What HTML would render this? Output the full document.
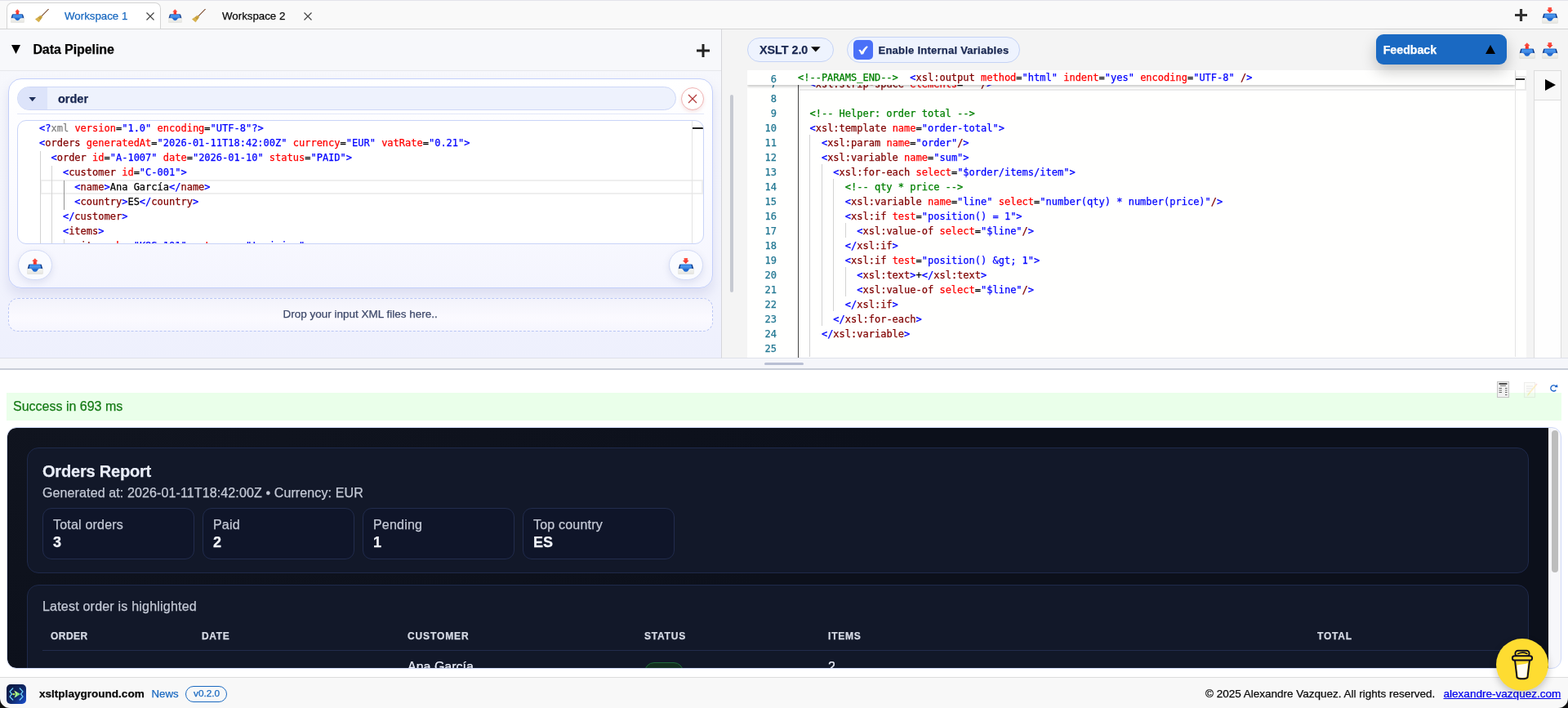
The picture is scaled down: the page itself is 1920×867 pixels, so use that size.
<!DOCTYPE html>
<html lang="en">
<head>
<meta charset="utf-8">
<title>xsltplayground.com</title>
<style>
*{box-sizing:border-box}
html,body{margin:0;padding:0}
body{width:1920px;height:867px;overflow:hidden;background:#fff;position:relative;
 font-family:"Liberation Sans",sans-serif;color:#000}
#app{position:absolute;left:0;top:0;width:1920px;height:867px;overflow:hidden;will-change:transform;-webkit-text-stroke:.25px}
.abs{position:absolute}
.t{position:absolute;white-space:nowrap;line-height:1}
svg{display:block}
.ico{position:absolute;z-index:2}
/* ---------- top bar ---------- */
#topbar{position:absolute;left:0;top:0;width:1920px;height:36px;background:#f9f9f9;border-top:1px solid #e3e3ea;border-bottom:1px solid #d4d4d4}
#tab1{position:absolute;left:8px;top:2px;width:189px;height:32px;background:#fff;border:1px solid #d4d4d4;border-bottom:none;border-radius:7px 7px 0 0}
/* ---------- left panel ---------- */
#left{position:absolute;left:0;top:36px;width:884px;height:403px;background:linear-gradient(180deg,#f7f8fc 0%,#f4f5fd 60%,#eef0fd 100%);border-right:1px solid #d6d6da;border-bottom:1px solid #dfe1ea}
#lefthead{position:absolute;left:0;top:0;width:883px;height:51px;border-bottom:1px solid #e6e7ec;background:#f7f8fb}
#card{position:absolute;left:10px;top:60px;width:863px;height:257px;border:1px solid #c3cffa;border-radius:16px;
 background:linear-gradient(180deg,#ffffff 0%,#fbfbff 50%,#f4f5fe 100%);box-shadow:0 8px 14px rgba(120,130,190,.18)}
#pill{position:absolute;left:10px;top:9px;width:807px;height:29px;border:1px solid #cdd7f7;border-radius:15px;background:#eef2fd;overflow:hidden}
#pill .tg{position:absolute;left:0;top:0;width:36px;height:29px;background:#dde4fa}
#closebtn{position:absolute;left:823px;top:10px;width:28px;height:28px;border-radius:50%;border:1px solid #f0b4b4;background:#fff;box-shadow:0 2px 4px rgba(200,80,80,.15)}
#carddiv{position:absolute;left:10px;top:42px;width:841px;height:1px;background:#e3e7f8}
#ed1{position:absolute;left:10px;top:50px;width:841px;height:152px;border:1px solid #c9d4f8;border-radius:11px;background:#fff;overflow:hidden}
.code{font-family:"DejaVu Sans Mono","Liberation Mono",monospace;font-size:12px;line-height:18px;white-space:pre;color:#000}
.code .ln{height:18px}
.kd{color:#0000ff}.kt{color:#800000}.ka{color:#ff0000}.kv{color:#0000ff}.kc{color:#008000}.km{color:#808080}
.guide{position:absolute;width:1px;background:#d3d3d3;z-index:1}
.cbtn{position:absolute;width:42px;height:37px;border-radius:18.5px;border:1px solid #d3dbf6;background:#fafbff;box-shadow:0 3px 8px rgba(100,110,170,.16)}
#drop{position:absolute;left:10px;top:329px;width:863px;height:41px;border:1px dashed #b9c6f5;border-radius:12px;background:linear-gradient(180deg,#f3f3fb 0%,#fbfaff 60%,#f6f6fe 100%)}
/* ---------- right panel ---------- */
#right{position:absolute;left:884px;top:36px;width:1036px;height:403px;background:#f4f4f4;border-bottom:1px solid #dfe1ea}
.rpill{position:absolute;border:1px solid #c5d3f5;background:#eef3fe;border-radius:16px}
#ed2{position:absolute;left:31px;top:50px;width:954px;height:352px;background:#fffffe;overflow:hidden;z-index:0}
#ed2 .no{display:inline-block;width:36px;text-align:right;color:#237893;margin-right:26px}
#sticky .no{position:relative;top:1.5px}
#sticky{position:absolute;left:0;top:0;width:940px;height:18px;background:#fffffe;box-shadow:0 2px 3px rgba(0,0,0,.22);z-index:3}
#runcol{position:absolute;left:994px;top:50px;width:34px;height:352px;border:1px solid #dcdcdc;border-bottom:none;background:#fefefe}
#runbtn{position:absolute;left:0;top:0;width:32px;height:36px;border-bottom:1px solid #dcdcdc;background:#f8f8f8}
#feedback{position:absolute;left:801px;top:6px;width:160px;height:37px;border-radius:9px;background:#1a69c2;box-shadow:0 8px 18px rgba(0,0,0,.22);z-index:5}
/* ---------- splitter ---------- */
#split{position:absolute;left:0;top:439px;width:1920px;height:14px;background:#f5f6fa;border-bottom:2px solid #c9ced8}
/* ---------- bottom ---------- */
#succ{position:absolute;left:8px;top:481px;width:1904px;height:34px;background:#eaffea}
#frame{position:absolute;left:8px;top:523px;width:1904px;height:296px;border-radius:12px;background:#f7f7fa;overflow:hidden;border:1px solid #cfd9f8}
#dark{position:absolute;left:0;top:0;width:1887px;height:294px;background:radial-gradient(1400px 500px at 5% 0%,#10141f 0%,#0c101b 70%);overflow:hidden;border-radius:11px 0 0 11px}
.dcard{position:absolute;left:24px;width:1839px;border:1px solid #1f2a4b;border-radius:14px;background:#121829}
.stat{position:absolute;top:73px;width:186px;height:63px;border:1px solid #222c4d;border-radius:11px;background:#0f1529}
.dtxt{color:#c4c9d6}
.th{position:absolute;top:56px;white-space:nowrap;line-height:1;font-weight:bold;font-size:12px;color:#d6dae5}
/* ---------- footer ---------- */
#footer{position:absolute;left:0;top:829px;width:1920px;height:38px;background:#f8f8f8;border-top:1px solid #dcdcdc}
#coffee{position:absolute;left:1832px;top:782px;width:64px;height:64px;border-radius:50%;background:#fedc31;box-shadow:0 4px 10px rgba(0,0,0,.22);z-index:20}
.corner{position:absolute;width:12px;height:12px;z-index:30;overflow:hidden}
</style>
</head>
<body>
<div id="app">
<div id="topbar">
 <div id="tab1"></div>
 <svg class="ico" style="left:13px;top:10px;opacity:1" width="17" height="17" viewBox="0 0 20 20"><defs><linearGradient id="b1" x1="0" y1="0" x2="0" y2="1"><stop offset="0" stop-color="#2a78dc"/><stop offset=".45" stop-color="#4f9bf0"/><stop offset="1" stop-color="#1c66cf"/></linearGradient><linearGradient id="r1" x1="0" y1="0" x2="0" y2="1"><stop offset="0" stop-color="#ff5a4d"/><stop offset="1" stop-color="#f02a1e"/></linearGradient><linearGradient id="w1" x1="0" y1="0" x2="0" y2="1"><stop offset="0" stop-color="#f6f6f2"/><stop offset="1" stop-color="#e4e4e0"/></linearGradient></defs><path d="M2.3 7.7 L17.6 7.7 L19.4 13.6 L0.6 13.6 Z" fill="#0a3280"/><path d="M3.4 7.7 L16.5 7.7 L17.6 13.6 L2.4 13.6 Z" fill="url(#b1)"/><rect x="0.3" y="13.1" width="19.3" height="6.6" rx="1.2" fill="url(#w1)" stroke="#d9d9d4" stroke-width=".4"/><path d="M4.4 13 C6.2 13 6.5 14.7 7.3 15.7 C8.4 17 11.4 17 12.5 15.7 C13.3 14.7 13.6 13 15.4 13 Z" fill="#1f6ad2"/><path d="M9.8 0.3 L13.4 4.1 L11.8 4.1 L11.8 7.7 L7.8 7.7 L7.8 4.1 L6.2 4.1 Z" fill="url(#r1)"/></svg><svg class="ico" style="left:42.5px;top:10px" width="17" height="17" viewBox="0 0 17 17"><path d="M16.4 0.2 L7.6 9.2" stroke="#7a4a2c" stroke-width="1.05" stroke-linecap="round" fill="none"/><path d="M6.9 7.9 L8.9 9.9 L4.5 16 L0.3 12.5 Z" fill="#d8b24a" stroke="#c9a03a" stroke-width=".4" stroke-linejoin="round"/><path d="M5.6 9.1 L7.9 11.2 M4.3 10.2 L7 12.6" stroke="#a27a28" stroke-width=".9" fill="none"/></svg>
 <div class="t" style="left:79px;top:12px;font-size:13.3px;color:#1a69c0">Workspace 1</div>
 <svg class="ico" style="left:178px;top:13px" width="12" height="12" viewBox="0 0 12 12"><path d="M1.5 1.5 L10.5 10.5 M10.5 1.5 L1.5 10.5" stroke="#444" stroke-width="1.2" fill="none"/></svg>
 <svg class="ico" style="left:205.5px;top:10px;opacity:1" width="17" height="17" viewBox="0 0 20 20"><defs><linearGradient id="b2" x1="0" y1="0" x2="0" y2="1"><stop offset="0" stop-color="#2a78dc"/><stop offset=".45" stop-color="#4f9bf0"/><stop offset="1" stop-color="#1c66cf"/></linearGradient><linearGradient id="r2" x1="0" y1="0" x2="0" y2="1"><stop offset="0" stop-color="#ff5a4d"/><stop offset="1" stop-color="#f02a1e"/></linearGradient><linearGradient id="w2" x1="0" y1="0" x2="0" y2="1"><stop offset="0" stop-color="#f6f6f2"/><stop offset="1" stop-color="#e4e4e0"/></linearGradient></defs><path d="M2.3 7.7 L17.6 7.7 L19.4 13.6 L0.6 13.6 Z" fill="#0a3280"/><path d="M3.4 7.7 L16.5 7.7 L17.6 13.6 L2.4 13.6 Z" fill="url(#b2)"/><rect x="0.3" y="13.1" width="19.3" height="6.6" rx="1.2" fill="url(#w2)" stroke="#d9d9d4" stroke-width=".4"/><path d="M4.4 13 C6.2 13 6.5 14.7 7.3 15.7 C8.4 17 11.4 17 12.5 15.7 C13.3 14.7 13.6 13 15.4 13 Z" fill="#1f6ad2"/><path d="M9.8 0.3 L13.4 4.1 L11.8 4.1 L11.8 7.7 L7.8 7.7 L7.8 4.1 L6.2 4.1 Z" fill="url(#r2)"/></svg><svg class="ico" style="left:235px;top:10px" width="17" height="17" viewBox="0 0 17 17"><path d="M16.4 0.2 L7.6 9.2" stroke="#7a4a2c" stroke-width="1.05" stroke-linecap="round" fill="none"/><path d="M6.9 7.9 L8.9 9.9 L4.5 16 L0.3 12.5 Z" fill="#d8b24a" stroke="#c9a03a" stroke-width=".4" stroke-linejoin="round"/><path d="M5.6 9.1 L7.9 11.2 M4.3 10.2 L7 12.6" stroke="#a27a28" stroke-width=".9" fill="none"/></svg>
 <div class="t" style="left:272px;top:12px;font-size:13.3px;color:#0a0a0a">Workspace 2</div>
 <svg class="ico" style="left:371px;top:13px" width="12" height="12" viewBox="0 0 12 12"><path d="M1.5 1.5 L10.5 10.5 M10.5 1.5 L1.5 10.5" stroke="#444" stroke-width="1.2" fill="none"/></svg>
 <svg class="ico" style="left:1855px;top:10px" width="15" height="15" viewBox="0 0 15 15"><path d="M7.5 0 V15 M0 7.5 H15" stroke="#333" stroke-width="3.2" fill="none"/></svg>
 <svg class="ico" style="left:1888px;top:8px;opacity:1" width="20" height="20" viewBox="0 0 20 20"><defs><linearGradient id="b3" x1="0" y1="0" x2="0" y2="1"><stop offset="0" stop-color="#2a78dc"/><stop offset=".45" stop-color="#4f9bf0"/><stop offset="1" stop-color="#1c66cf"/></linearGradient><linearGradient id="r3" x1="0" y1="0" x2="0" y2="1"><stop offset="0" stop-color="#ff5a4d"/><stop offset="1" stop-color="#f02a1e"/></linearGradient><linearGradient id="w3" x1="0" y1="0" x2="0" y2="1"><stop offset="0" stop-color="#f6f6f2"/><stop offset="1" stop-color="#e4e4e0"/></linearGradient></defs><path d="M2.3 7.7 L17.6 7.7 L19.4 13.6 L0.6 13.6 Z" fill="#0a3280"/><path d="M3.4 7.7 L16.5 7.7 L17.6 13.6 L2.4 13.6 Z" fill="url(#b3)"/><rect x="0.3" y="13.1" width="19.3" height="6.6" rx="1.2" fill="url(#w3)" stroke="#d9d9d4" stroke-width=".4"/><path d="M4.4 13 C6.2 13 6.5 14.7 7.3 15.7 C8.4 17 11.4 17 12.5 15.7 C13.3 14.7 13.6 13 15.4 13 Z" fill="#1f6ad2"/><path d="M7.6 0 L12 0 L12 2.9 L13.7 2.9 L9.8 7 L5.9 2.9 L7.6 2.9 Z" fill="url(#r3)"/></svg>
</div>
<div id="left">
 <div id="lefthead">
  <svg class="ico" style="left:14px;top:19px" width="11" height="11" viewBox="0 0 11 11"><path d="M0 0 H11 L5.5 11 Z" fill="#000"/></svg>
  <div class="t" style="left:40.4px;top:17px;font-size:16px;font-weight:bold;letter-spacing:-0.08px;color:#000">Data Pipeline</div>
  <svg class="ico" style="left:853px;top:18px" width="16" height="16" viewBox="0 0 16 16"><path d="M8 0 V16 M0 8 H16" stroke="#222" stroke-width="3" fill="none"/></svg>
 </div>
 <div id="card">
  <div id="pill"><div class="tg"></div>
   <svg class="ico" style="left:13px;top:12px" width="9.4" height="5.2" viewBox="0 0 10 6"><path d="M0 0 H10 L5 6 Z" fill="#1f2f5a"/></svg>
   <div class="t" style="left:49px;top:7px;font-size:14.5px;font-weight:bold;color:#1a2852">order</div>
  </div>
  <div id="closebtn"><svg class="ico" style="left:7px;top:7px" width="12" height="12" viewBox="0 0 12 12"><path d="M1 1 L11 11 M11 1 L1 11" stroke="#b23a3a" stroke-width="1.3" fill="none"/></svg></div>
  <div id="carddiv"></div>
  <div id="ed1">
   <div class="guide" style="left:27px;top:37px;height:120px"></div>
   <div class="guide" style="left:41px;top:55px;height:100px"></div>
   <div class="guide" style="left:56px;top:73px;height:36px;background:#939393"></div>
   <div class="guide" style="left:56px;top:145px;height:10px"></div>
   <div class="abs" style="left:27px;top:72px;width:812px;height:18px;border:2px solid #eeeeee"></div>
   <div class="abs" style="left:825px;top:0;width:1px;height:150px;background:#e4e4e4"></div>
   <div class="abs" style="left:826px;top:8px;width:13px;height:2px;background:#222"></div>
   <div class="code abs" style="left:26px;top:0px"><div class="ln"><span class="kd">&lt;?</span><span class="km">xml</span> <span class="ka">version</span>=<span class="kv">"1.0"</span> <span class="ka">encoding</span>=<span class="kv">"UTF-8"</span><span class="kd">?&gt;</span></div><div class="ln"><span class="kd">&lt;</span><span class="kt">orders</span> <span class="ka">generatedAt</span>=<span class="kv">"2026-01-11T18:42:00Z"</span> <span class="ka">currency</span>=<span class="kv">"EUR"</span> <span class="ka">vatRate</span>=<span class="kv">"0.21"</span><span class="kd">&gt;</span></div><div class="ln">  <span class="kd">&lt;</span><span class="kt">order</span> <span class="ka">id</span>=<span class="kv">"A-1007"</span> <span class="ka">date</span>=<span class="kv">"2026-01-10"</span> <span class="ka">status</span>=<span class="kv">"PAID"</span><span class="kd">&gt;</span></div><div class="ln">    <span class="kd">&lt;</span><span class="kt">customer</span> <span class="ka">id</span>=<span class="kv">"C-001"</span><span class="kd">&gt;</span></div><div class="ln">      <span class="kd">&lt;</span><span class="kt">name</span><span class="kd">&gt;</span>Ana García<span class="kd">&lt;/</span><span class="kt">name</span><span class="kd">&gt;</span></div><div class="ln">      <span class="kd">&lt;</span><span class="kt">country</span><span class="kd">&gt;</span>ES<span class="kd">&lt;/</span><span class="kt">country</span><span class="kd">&gt;</span></div><div class="ln">    <span class="kd">&lt;/</span><span class="kt">customer</span><span class="kd">&gt;</span></div><div class="ln">    <span class="kd">&lt;</span><span class="kt">items</span><span class="kd">&gt;</span></div><div class="ln">      <span class="kd">&lt;</span><span class="kt">item</span> <span class="ka">sku</span>=<span class="kv">"K8S-101"</span> <span class="ka">category</span>=<span class="kv">"training"</span><span class="kd">&gt;</span></div></div>
  </div>
  <div class="cbtn" style="left:11px;top:209px"><svg class="ico" style="left:10px;top:9px;opacity:1" width="20" height="20" viewBox="0 0 20 20"><defs><linearGradient id="b4" x1="0" y1="0" x2="0" y2="1"><stop offset="0" stop-color="#2a78dc"/><stop offset=".45" stop-color="#4f9bf0"/><stop offset="1" stop-color="#1c66cf"/></linearGradient><linearGradient id="r4" x1="0" y1="0" x2="0" y2="1"><stop offset="0" stop-color="#ff5a4d"/><stop offset="1" stop-color="#f02a1e"/></linearGradient><linearGradient id="w4" x1="0" y1="0" x2="0" y2="1"><stop offset="0" stop-color="#f6f6f2"/><stop offset="1" stop-color="#e4e4e0"/></linearGradient></defs><path d="M2.3 7.7 L17.6 7.7 L19.4 13.6 L0.6 13.6 Z" fill="#0a3280"/><path d="M3.4 7.7 L16.5 7.7 L17.6 13.6 L2.4 13.6 Z" fill="url(#b4)"/><rect x="0.3" y="13.1" width="19.3" height="6.6" rx="1.2" fill="url(#w4)" stroke="#d9d9d4" stroke-width=".4"/><path d="M4.4 13 C6.2 13 6.5 14.7 7.3 15.7 C8.4 17 11.4 17 12.5 15.7 C13.3 14.7 13.6 13 15.4 13 Z" fill="#1f6ad2"/><path d="M9.8 0.3 L13.4 4.1 L11.8 4.1 L11.8 7.7 L7.8 7.7 L7.8 4.1 L6.2 4.1 Z" fill="url(#r4)"/></svg></div>
  <div class="cbtn" style="left:808px;top:209px"><svg class="ico" style="left:10px;top:9px;opacity:1" width="20" height="20" viewBox="0 0 20 20"><defs><linearGradient id="b5" x1="0" y1="0" x2="0" y2="1"><stop offset="0" stop-color="#2a78dc"/><stop offset=".45" stop-color="#4f9bf0"/><stop offset="1" stop-color="#1c66cf"/></linearGradient><linearGradient id="r5" x1="0" y1="0" x2="0" y2="1"><stop offset="0" stop-color="#ff5a4d"/><stop offset="1" stop-color="#f02a1e"/></linearGradient><linearGradient id="w5" x1="0" y1="0" x2="0" y2="1"><stop offset="0" stop-color="#f6f6f2"/><stop offset="1" stop-color="#e4e4e0"/></linearGradient></defs><path d="M2.3 7.7 L17.6 7.7 L19.4 13.6 L0.6 13.6 Z" fill="#0a3280"/><path d="M3.4 7.7 L16.5 7.7 L17.6 13.6 L2.4 13.6 Z" fill="url(#b5)"/><rect x="0.3" y="13.1" width="19.3" height="6.6" rx="1.2" fill="url(#w5)" stroke="#d9d9d4" stroke-width=".4"/><path d="M4.4 13 C6.2 13 6.5 14.7 7.3 15.7 C8.4 17 11.4 17 12.5 15.7 C13.3 14.7 13.6 13 15.4 13 Z" fill="#1f6ad2"/><path d="M7.6 0 L12 0 L12 2.9 L13.7 2.9 L9.8 7 L5.9 2.9 L7.6 2.9 Z" fill="url(#r5)"/></svg></div>
 </div>
 <div id="drop"><div class="t" style="left:335.5px;top:12.4px;font-size:13.5px;color:#3f4a6b">Drop your input XML files here..</div></div>
</div>
<div id="right">
 <div class="abs" style="left:10px;top:80px;width:4px;height:242px;background:#c6c9d1;border-radius:2px"></div>
 <div class="rpill" style="left:31px;top:10px;width:106px;height:30px">
  <div class="t" style="left:14px;top:6.6px;font-size:14.3px;font-weight:bold;color:#1a2852">XSLT 2.0</div>
  <svg class="ico" style="left:77.2px;top:10.2px" width="11.6" height="6.6" viewBox="0 0 11 6"><path d="M0 0 H11 L5.5 6 Z" fill="#0a0a0a"/></svg>
 </div>
 <div class="rpill" style="left:153px;top:9px;width:212px;height:32px">
  <div class="abs" style="left:7px;top:3px;width:24px;height:24px;border-radius:5px;background:#4a70f8"><svg class="ico" style="left:6px;top:6.5px" width="12" height="11" viewBox="0 0 12 11"><path d="M0.3 5.6 C1.3 4.5 2.5 4.5 3.2 5.5 L4.3 7.2 C6 4.2 8 1.9 10.6 0.3 L11.7 1.6 C9.4 4 7.5 7 6.2 10.3 L3.4 10.7 C2.7 8.8 1.6 7 0.3 5.6 Z" fill="#fff"/></svg></div>
  <div class="t" style="left:37.5px;top:8.5px;font-size:13px;letter-spacing:.24px;font-weight:bold;color:#1a2852">Enable Internal Variables</div>
 </div>
 <div id="ed2">
  <div class="abs" style="left:940px;top:0;width:1px;height:351px;background:#e4e4e4"></div>
  <div class="abs" style="left:941px;top:10px;width:13px;height:2px;background:#2a2a2a"></div>
  <div class="guide" style="left:62px;top:18px;height:334px;background:#444"></div>
  <div class="guide" style="left:76px;top:79px;height:272px"></div>
  <div class="guide" style="left:91px;top:115px;height:198px"></div>
  <div class="guide" style="left:105px;top:133px;height:162px"></div>
  <div class="guide" style="left:120px;top:187px;height:18px"></div>
  <div class="guide" style="left:120px;top:241px;height:36px"></div>
  <div class="abs" style="left:62px;top:7px;width:892px;height:18px;border:2px solid #eaeaea"></div>
  <div class="code abs" style="left:0;top:8px"><div class="ln"><span class="no">7</span>  <span class="kd">&lt;</span><span class="kt">xsl:strip-space</span> <span class="ka">elements</span>=<span class="kv">"*"</span><span class="kt">/</span><span class="kd">&gt;</span></div><div class="ln"><span class="no">8</span></div><div class="ln"><span class="no">9</span>  <span class="kc">&lt;!-- Helper: order total --&gt;</span></div><div class="ln"><span class="no">10</span>  <span class="kd">&lt;</span><span class="kt">xsl:template</span> <span class="ka">name</span>=<span class="kv">"order-total"</span><span class="kd">&gt;</span></div><div class="ln"><span class="no">11</span>    <span class="kd">&lt;</span><span class="kt">xsl:param</span> <span class="ka">name</span>=<span class="kv">"order"</span><span class="kt">/</span><span class="kd">&gt;</span></div><div class="ln"><span class="no">12</span>    <span class="kd">&lt;</span><span class="kt">xsl:variable</span> <span class="ka">name</span>=<span class="kv">"sum"</span><span class="kd">&gt;</span></div><div class="ln"><span class="no">13</span>      <span class="kd">&lt;</span><span class="kt">xsl:for-each</span> <span class="ka">select</span>=<span class="kv">"$order/items/item"</span><span class="kd">&gt;</span></div><div class="ln"><span class="no">14</span>        <span class="kc">&lt;!-- qty * price --&gt;</span></div><div class="ln"><span class="no">15</span>        <span class="kd">&lt;</span><span class="kt">xsl:variable</span> <span class="ka">name</span>=<span class="kv">"line"</span> <span class="ka">select</span>=<span class="kv">"number(qty) * number(price)"</span><span class="kt">/</span><span class="kd">&gt;</span></div><div class="ln"><span class="no">16</span>        <span class="kd">&lt;</span><span class="kt">xsl:if</span> <span class="ka">test</span>=<span class="kv">"position() = 1"</span><span class="kd">&gt;</span></div><div class="ln"><span class="no">17</span>          <span class="kd">&lt;</span><span class="kt">xsl:value-of</span> <span class="ka">select</span>=<span class="kv">"$line"</span><span class="kt">/</span><span class="kd">&gt;</span></div><div class="ln"><span class="no">18</span>        <span class="kd">&lt;/</span><span class="kt">xsl:if</span><span class="kd">&gt;</span></div><div class="ln"><span class="no">19</span>        <span class="kd">&lt;</span><span class="kt">xsl:if</span> <span class="ka">test</span>=<span class="kv">"position() &amp;gt; 1"</span><span class="kd">&gt;</span></div><div class="ln"><span class="no">20</span>          <span class="kd">&lt;</span><span class="kt">xsl:text</span><span class="kd">&gt;</span>+<span class="kd">&lt;/</span><span class="kt">xsl:text</span><span class="kd">&gt;</span></div><div class="ln"><span class="no">21</span>          <span class="kd">&lt;</span><span class="kt">xsl:value-of</span> <span class="ka">select</span>=<span class="kv">"$line"</span><span class="kt">/</span><span class="kd">&gt;</span></div><div class="ln"><span class="no">22</span>        <span class="kd">&lt;/</span><span class="kt">xsl:if</span><span class="kd">&gt;</span></div><div class="ln"><span class="no">23</span>      <span class="kd">&lt;/</span><span class="kt">xsl:for-each</span><span class="kd">&gt;</span></div><div class="ln"><span class="no">24</span>    <span class="kd">&lt;/</span><span class="kt">xsl:variable</span><span class="kd">&gt;</span></div><div class="ln"><span class="no">25</span></div></div>
  <div id="sticky" class="code"><span class="no">6</span><span class="kc">&lt;!--PARAMS_END--&gt;</span>  <span class="kd">&lt;</span><span class="kt">xsl:output</span> <span class="ka">method</span>=<span class="kv">"html"</span> <span class="ka">indent</span>=<span class="kv">"yes"</span> <span class="ka">encoding</span>=<span class="kv">"UTF-8"</span> <span class="kt">/</span><span class="kd">&gt;</span></div>
 </div>
 <div id="runcol"><div id="runbtn"><svg class="ico" style="left:13px;top:10px" width="13" height="14" viewBox="0 0 13 14"><path d="M0 0 L13 7 L0 14 Z" fill="#000"/></svg></div></div>
 <div id="feedback">
  <div class="t" style="left:8.7px;top:11.9px;font-size:14.2px;font-weight:bold;color:#fff">Feedback</div>
  <svg class="ico" style="left:134px;top:13px" width="12" height="11" viewBox="0 0 12 11"><path d="M6 0 L12 11 H0 Z" fill="#000"/></svg>
 </div>
 <svg class="ico" style="left:976px;top:15.5px;opacity:1" width="20" height="20" viewBox="0 0 20 20"><defs><linearGradient id="b6" x1="0" y1="0" x2="0" y2="1"><stop offset="0" stop-color="#2a78dc"/><stop offset=".45" stop-color="#4f9bf0"/><stop offset="1" stop-color="#1c66cf"/></linearGradient><linearGradient id="r6" x1="0" y1="0" x2="0" y2="1"><stop offset="0" stop-color="#ff5a4d"/><stop offset="1" stop-color="#f02a1e"/></linearGradient><linearGradient id="w6" x1="0" y1="0" x2="0" y2="1"><stop offset="0" stop-color="#f6f6f2"/><stop offset="1" stop-color="#e4e4e0"/></linearGradient></defs><path d="M2.3 7.7 L17.6 7.7 L19.4 13.6 L0.6 13.6 Z" fill="#0a3280"/><path d="M3.4 7.7 L16.5 7.7 L17.6 13.6 L2.4 13.6 Z" fill="url(#b6)"/><rect x="0.3" y="13.1" width="19.3" height="6.6" rx="1.2" fill="url(#w6)" stroke="#d9d9d4" stroke-width=".4"/><path d="M4.4 13 C6.2 13 6.5 14.7 7.3 15.7 C8.4 17 11.4 17 12.5 15.7 C13.3 14.7 13.6 13 15.4 13 Z" fill="#1f6ad2"/><path d="M9.8 0.3 L13.4 4.1 L11.8 4.1 L11.8 7.7 L7.8 7.7 L7.8 4.1 L6.2 4.1 Z" fill="url(#r6)"/></svg><svg class="ico" style="left:1004px;top:15.5px;opacity:1" width="20" height="20" viewBox="0 0 20 20"><defs><linearGradient id="b7" x1="0" y1="0" x2="0" y2="1"><stop offset="0" stop-color="#2a78dc"/><stop offset=".45" stop-color="#4f9bf0"/><stop offset="1" stop-color="#1c66cf"/></linearGradient><linearGradient id="r7" x1="0" y1="0" x2="0" y2="1"><stop offset="0" stop-color="#ff5a4d"/><stop offset="1" stop-color="#f02a1e"/></linearGradient><linearGradient id="w7" x1="0" y1="0" x2="0" y2="1"><stop offset="0" stop-color="#f6f6f2"/><stop offset="1" stop-color="#e4e4e0"/></linearGradient></defs><path d="M2.3 7.7 L17.6 7.7 L19.4 13.6 L0.6 13.6 Z" fill="#0a3280"/><path d="M3.4 7.7 L16.5 7.7 L17.6 13.6 L2.4 13.6 Z" fill="url(#b7)"/><rect x="0.3" y="13.1" width="19.3" height="6.6" rx="1.2" fill="url(#w7)" stroke="#d9d9d4" stroke-width=".4"/><path d="M4.4 13 C6.2 13 6.5 14.7 7.3 15.7 C8.4 17 11.4 17 12.5 15.7 C13.3 14.7 13.6 13 15.4 13 Z" fill="#1f6ad2"/><path d="M7.6 0 L12 0 L12 2.9 L13.7 2.9 L9.8 7 L5.9 2.9 L7.6 2.9 Z" fill="url(#r7)"/></svg>
</div>
<div id="split"><div class="abs" style="left:936px;top:5px;width:48px;height:3px;border-radius:2px;background:#b9c0d4"></div></div>
<svg class="ico" style="left:1833px;top:467px" width="15" height="20" viewBox="0 0 15 20"><rect x=".5" y=".5" width="14" height="19" fill="#f1f1f1" stroke="#c4c4c4"/><path d="M2.5 3 H12.5" stroke="#3a3a3a" stroke-width="1.8"/><path d="M4 5.4 H11" stroke="#777" stroke-width="1"/><path d="M2.5 8.5 H6 M10 8.5 H12.5 M2.5 11 H6 M10 11 H12.5 M2.5 13.5 H6 M10 13.5 H12.5 M10 16.5 H12.5" stroke="#666" stroke-width="1"/></svg>
<svg class="ico" style="left:1866px;top:467px;opacity:.3" width="17" height="20" viewBox="0 0 17 20"><rect x=".5" y="1.5" width="13" height="18" fill="#f4f4ee" stroke="#c8c8c0"/><path d="M3 6 H11 M3 9 H11 M3 12 H8" stroke="#aaa" stroke-width="1"/><path d="M15.5 5 L6 16.5 L4 18.5 L4.8 15.6 L14 4 Z" fill="#f2c740"/><path d="M14 4 L15.5 5 L16.6 3.6 L15.2 2.6 Z" fill="#ef8a8a"/></svg>
<svg class="ico" style="left:1897px;top:470px" width="11" height="11" viewBox="0 0 11 11"><path d="M8.3 7.6 A3.6 3.6 0 1 1 8.3 3.2" stroke="#1560c8" stroke-width="1.3" fill="none"/><path d="M6.6 4.2 L10.6 4.2 L9.6 0.8 Z" fill="#1560c8"/></svg>
<div id="succ"><div class="t" style="left:8px;top:9px;font-size:16px;color:#157a15">Success in 693 ms</div></div>
<div id="frame">
 <div class="abs" style="left:1891px;top:3px;width:8px;height:174px;border-radius:4px;background:#bdbdbd"></div>
 <div id="dark">
  <div class="dcard" style="top:24px;height:154px">
   <div class="t" style="left:18px;top:18px;font-size:20px;font-weight:bold;letter-spacing:-0.2px;color:#e9edf8">Orders Report</div>
   <div class="t dtxt" style="left:18px;top:47px;font-size:16px;letter-spacing:.12px">Generated at: 2026-01-11T18:42:00Z • Currency: EUR</div>
   <div class="stat" style="left:18px"><div class="t dtxt" style="left:12px;top:12px;font-size:16px;letter-spacing:.2px">Total orders</div><div class="t" style="left:12px;top:32px;font-size:18px;font-weight:bold;color:#f1f4fb">3</div></div>
   <div class="stat" style="left:214px"><div class="t dtxt" style="left:12px;top:12px;font-size:16px;letter-spacing:.2px">Paid</div><div class="t" style="left:12px;top:32px;font-size:18px;font-weight:bold;color:#f1f4fb">2</div></div>
   <div class="stat" style="left:410px"><div class="t dtxt" style="left:12px;top:12px;font-size:16px;letter-spacing:.2px">Pending</div><div class="t" style="left:12px;top:32px;font-size:18px;font-weight:bold;color:#f1f4fb">1</div></div>
   <div class="stat" style="left:606px"><div class="t dtxt" style="left:12px;top:12px;font-size:16px;letter-spacing:.2px">Top country</div><div class="t" style="left:12px;top:32px;font-size:18px;font-weight:bold;color:#f1f4fb">ES</div></div>
  </div>
  <div class="dcard" style="top:192px;height:400px">
   <div class="t dtxt" style="left:18px;top:18px;font-size:16px;letter-spacing:.21px">Latest order is highlighted</div>
   <div class="th" style="left:28px;letter-spacing:.45px">ORDER</div>
   <div class="th" style="left:213px;letter-spacing:.7px">DATE</div>
   <div class="th" style="left:465px;letter-spacing:.88px">CUSTOMER</div>
   <div class="th" style="left:755px;letter-spacing:.8px">STATUS</div>
   <div class="th" style="left:980px;letter-spacing:.8px">ITEMS</div>
   <div class="th" style="left:1579px;letter-spacing:.8px">TOTAL</div>
   <div class="abs" style="left:18px;top:79px;width:1801px;height:1px;background:#222c4d"></div>
   <div class="t" style="left:465px;top:92px;font-size:16px;color:#e9edf8">Ana García</div>
   <div class="t" style="left:980px;top:92px;font-size:16px;color:#e9edf8">2</div>
   <div class="abs" style="left:755px;top:94px;width:48px;height:24px;border-radius:12px;border:1px solid #1f6b3c;background:#12301f"></div>
   <div class="t" style="left:213px;top:99px;font-size:14px;color:#3c445c">2026-01-10</div>
  </div>
 </div>
</div>
<div id="footer">
 <svg class="ico" style="left:8px;top:8px" width="24" height="24" viewBox="0 0 24 24"><defs><linearGradient id="lg" x1="0" y1="0" x2="1" y2="1"><stop offset="0" stop-color="#0a1538"/><stop offset=".55" stop-color="#102868"/><stop offset="1" stop-color="#1a52d6"/></linearGradient><linearGradient id="la" x1="0" y1="0" x2="1" y2="1"><stop offset="0" stop-color="#d9f06a"/><stop offset=".5" stop-color="#8aea7c"/><stop offset="1" stop-color="#4fd890"/></linearGradient></defs><rect width="24" height="24" rx="5" fill="url(#lg)"/><path d="M7.7 5 L4 8.9 L6.5 11.9 L4 15.1 L7.7 19" stroke="#6fd3fb" stroke-width="1.35" fill="none" stroke-linecap="round" stroke-linejoin="round"/><path d="M16.3 5 L20 8.9 L17.5 11.9 L20 15.1 L16.3 19" stroke="#6fd3fb" stroke-width="1.35" fill="none" stroke-linecap="round" stroke-linejoin="round"/><ellipse cx="8.8" cy="12.1" rx="1.8" ry="1.05" fill="#b9e85a"/><path d="M9.3 7.5 L17 11.9 L9.3 16.7 L11.2 11.9 Z" fill="url(#la)"/><path d="M11.3 8.8 L12.1 9.2 L12.1 15 L11.3 15.4 L11.9 11.9 Z" fill="#f4fbe6"/></svg>
 <div class="t" style="left:48px;top:13.3px;font-size:13.55px;font-weight:bold;color:#0a0a0a">xsltplayground.com</div>
 <div class="t" style="left:185.5px;top:13.3px;font-size:13.25px;color:#1a69c0">News</div>
 <div class="abs" style="left:227px;top:10px;width:51px;height:20px;border:1px solid #1a69c0;border-radius:10px"><div class="t" style="left:9px;top:3px;font-size:11.8px;color:#1a69c0">v0.2.0</div></div>
 <div class="t" style="left:1476px;top:13.3px;font-size:13.5px;color:#0a0a0a">© 2025 Alexandre Vazquez. All rights reserved.</div>
 <div class="t" style="left:1767.5px;top:13.3px;font-size:13.56px;color:#0000ee;text-decoration:underline">alexandre-vazquez.com</div>
</div>
<div id="coffee"><svg class="ico" style="left:18px;top:13px" width="28" height="38" viewBox="0 0 28 38"><path d="M4.9 13 L7.5 34.4 C9 36.9 19 36.9 20.5 34.4 L23.1 13" fill="#fedc31" stroke="#0d0c22" stroke-width="2" stroke-linejoin="round"/><path d="M7.3 19.8 C11 18.2 16 19 20.9 16.8 L19.2 33.6 C17.2 35.3 10.8 35.3 8.8 33.6 Z" fill="#fffdf4"/><rect x="5.4" y="1.8" width="17.2" height="7" rx="3.4" fill="#fedc31" stroke="#0d0c22" stroke-width="1.9"/><path d="M8.6 5.6 C12 3.9 17 4 20 5.5" fill="none" stroke="#0d0c22" stroke-width="1.5" stroke-linecap="round"/><rect x="1.9" y="8.3" width="24.2" height="5.3" rx="2.65" fill="#fedc31" stroke="#0d0c22" stroke-width="2"/></svg></div>
<div class="corner" style="left:0;top:855px"><div class="abs" style="left:0;top:-12px;width:24px;height:24px;border-radius:50%;box-shadow:0 0 0 20px #111"></div></div>
<div class="corner" style="left:1908px;top:855px"><div class="abs" style="left:-12px;top:-12px;width:24px;height:24px;border-radius:50%;box-shadow:0 0 0 20px #111"></div></div>
</div>
</body>
</html>
